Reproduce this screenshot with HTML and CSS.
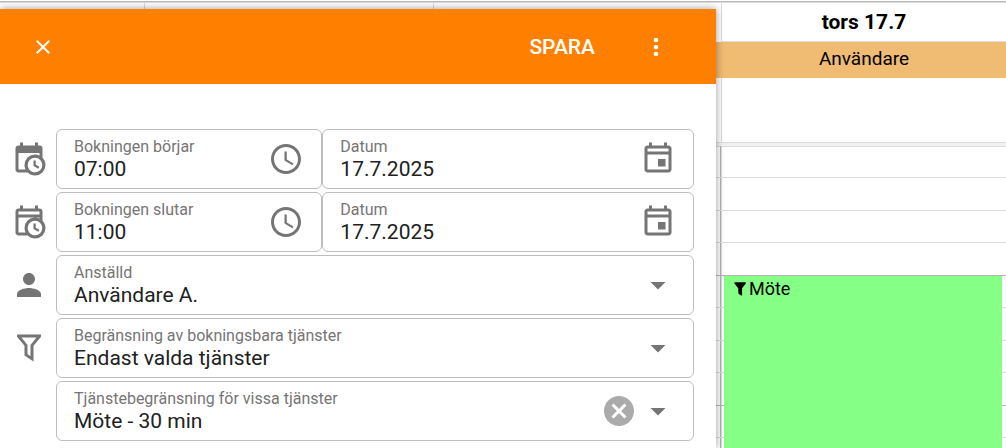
FILE: index.html
```html
<!DOCTYPE html>
<html lang="sv">

<head>
    <meta charset="UTF-8" />
    <meta name="viewport" content="width=device-width, initial-scale=1.0" />
    <title>Bokning</title>
    <link rel="stylesheet" href="styles.css">
</head>

<body>

    <!-- Calendar -->
    <main class="calendar">
        <div class="day-header">
            <div class="time-col"></div>
            <div class="day"></div>
            <div class="day"></div>
            <div class="day">
                <h2 class="day-name">tors 17.7</h2>
                <div class="day-user">Användare</div>
            </div>
        </div>
        <div class="divider"></div>
        <div class="day-grid">
            <div class="time-col"></div>
            <div class="day"></div>
            <div class="day"></div>
            <div class="day">
                <div class="hour"><span></span><span></span><span></span><span></span></div>
                <div class="hour"><span></span><span></span><span></span><span></span></div>
                <div class="hour"><span></span><span></span><span></span><span></span></div>
                <div class="event">
                    <svg class="event-icon" viewBox="0 0 12 14">
                        <path d="M0.8 0.3h10.6q0.8 0.4 0.3 1.3L8.1 6.2V13.2q-0.3 0.6-0.9 0.3L4.6 11.7Q4.3 11.4 4.3 11V6.2L0.4 1.6Q0 0.7 0.8 0.3z" />
                    </svg>
                    <span>Möte</span>
                </div>
            </div>
        </div>
    </main>

    <!-- Booking form -->
    <form class="dialog">
        <header class="toolbar">
            <button type="button" class="tool-btn" aria-label="Stäng">
                <svg class="close-icon" viewBox="0 0 24 24">
                    <path d="M19 6.41L17.59 5 12 10.59 6.41 5 5 6.41 10.59 12 5 17.59 6.41 19 12 13.41 17.59 19 19 17.59 13.41 12z" />
                </svg>
            </button>
            <button type="submit" class="tool-btn save-btn">SPARA</button>
            <button type="button" class="tool-btn" aria-label="Mer">
                <svg class="more-icon" viewBox="0 0 24 24">
                    <path d="M12 8a2 2 0 1 0 0-4 2 2 0 0 0 0 4zm0 2a2 2 0 1 0 0 4 2 2 0 0 0 0-4zm0 6a2 2 0 1 0 0 4 2 2 0 0 0 0-4z" />
                </svg>
            </button>
        </header>

        <div class="fields">
            <div class="form-row">
                <svg class="icon" viewBox="0 0 24 24">
                    <path d="M15,13H16.5V15.82L18.94,17.23L18.19,18.53L15,16.69V13M19,8H5V19H9.67C9.24,18.09 9,17.07 9,16A7,7 0 0,1 16,9C17.07,9 18.09,9.24 19,9.67V8M5,21C3.89,21 3,20.1 3,19V5C3,3.89 3.89,3 5,3H6V1H8V3H16V1H18V3H19A2,2 0 0,1 21,5V11.1C22.24,12.36 23,14.09 23,16A7,7 0 0,1 16,23C14.09,23 12.36,22.24 11.1,21H5M16,11.15A4.85,4.85 0 0,0 11.15,16C11.15,18.68 13.32,20.85 16,20.85A4.85,4.85 0 0,0 20.85,16C20.85,13.32 18.68,11.15 16,11.15Z" />
                </svg>
                <div class="field time-field">
                    <div class="field-text">
                        <label for="startTime">Bokningen börjar</label>
                        <input type="text" id="startTime" value="07:00">
                    </div>
                    <button type="button" class="icon-btn" aria-label="Välj tid">
                        <svg class="icon" viewBox="0 0 24 24">
                            <path d="M11.99 2C6.47 2 2 6.48 2 12s4.47 10 9.99 10C17.52 22 22 17.52 22 12S17.52 2 11.99 2zM12 20c-4.42 0-8-3.58-8-8s3.58-8 8-8 8 3.58 8 8-3.58 8-8 8zm.5-13H11v6l5.25 3.15.75-1.23-4.5-2.67z" />
                        </svg>
                    </button>
                </div>
                <div class="field">
                    <div class="field-text">
                        <label for="startDate">Datum</label>
                        <input type="text" id="startDate" value="17.7.2025">
                    </div>
                    <button type="button" class="icon-btn" aria-label="Välj datum">
                        <svg class="icon" viewBox="0 0 24 24">
                            <path d="M17 12h-5v5h5v-5zM16 1v2H8V1H6v2H5c-1.1 0-2 .9-2 2v14c0 1.1.9 2 2 2h14c1.1 0 2-.9 2-2V5c0-1.1-.9-2-2-2h-1V1h-2zm3 18H5V9h14v10zM5 7V5h14v2H5z" fill-rule="evenodd" />
                        </svg>
                    </button>
                </div>
            </div>

            <div class="form-row">
                <svg class="icon" viewBox="0 0 24 24">
                    <path fill-rule="evenodd" d="M15,13H16.5V15.82L18.94,17.23L18.19,18.53L15,16.69V13M19,9H5V19H9.67C9.24,18.09 9,17.07 9,16A7,7 0 0,1 16,9C17.07,9 18.09,9.24 19,9.67V9M5,5V7H19V5H5M5,21C3.89,21 3,20.1 3,19V5C3,3.89 3.89,3 5,3H6V1H8V3H16V1H18V3H19A2,2 0 0,1 21,5V11.1C22.24,12.36 23,14.09 23,16A7,7 0 0,1 16,23C14.09,23 12.36,22.24 11.1,21H5M16,11.15A4.85,4.85 0 0,0 11.15,16C11.15,18.68 13.32,20.85 16,20.85A4.85,4.85 0 0,0 20.85,16C20.85,13.32 18.68,11.15 16,11.15Z" />
                </svg>
                <div class="field time-field">
                    <div class="field-text">
                        <label for="endTime">Bokningen slutar</label>
                        <input type="text" id="endTime" value="11:00">
                    </div>
                    <button type="button" class="icon-btn" aria-label="Välj tid">
                        <svg class="icon" viewBox="0 0 24 24">
                            <path d="M11.99 2C6.47 2 2 6.48 2 12s4.47 10 9.99 10C17.52 22 22 17.52 22 12S17.52 2 11.99 2zM12 20c-4.42 0-8-3.58-8-8s3.58-8 8-8 8 3.58 8 8-3.58 8-8 8zm.5-13H11v6l5.25 3.15.75-1.23-4.5-2.67z" />
                        </svg>
                    </button>
                </div>
                <div class="field">
                    <div class="field-text">
                        <label for="endDate">Datum</label>
                        <input type="text" id="endDate" value="17.7.2025">
                    </div>
                    <button type="button" class="icon-btn" aria-label="Välj datum">
                        <svg class="icon" viewBox="0 0 24 24">
                            <path d="M17 12h-5v5h5v-5zM16 1v2H8V1H6v2H5c-1.1 0-2 .9-2 2v14c0 1.1.9 2 2 2h14c1.1 0 2-.9 2-2V5c0-1.1-.9-2-2-2h-1V1h-2zm3 18H5V9h14v10zM5 7V5h14v2H5z" fill-rule="evenodd" />
                        </svg>
                    </button>
                </div>
            </div>

            <div class="form-row">
                <svg class="icon" viewBox="0 0 24 24">
                    <path d="M12 12c2.21 0 4-1.79 4-4s-1.79-4-4-4-4 1.79-4 4 1.79 4 4 4zm0 2c-2.67 0-8 1.34-8 4v2h16v-2c0-2.66-5.33-4-8-4z" />
                </svg>
                <div class="field">
                    <div class="field-text">
                        <label for="employee">Anställd</label>
                        <select id="employee">
                            <option>Användare A.</option>
                        </select>
                    </div>
                    <svg class="icon" viewBox="0 0 24 24">
                        <path d="M7 10l5 5 5-5z" />
                    </svg>
                </div>
            </div>

            <div class="form-row">
                <svg class="icon" viewBox="0 0 24 24">
                    <path fill-rule="evenodd" d="M4 3H20V4.5L15 10.5V21L9 17V10.5L4 4.5zM7 5L11 10V16L13 17.5V10L17 5z" />
                </svg>
                <div class="field">
                    <div class="field-text">
                        <label for="limit">Begränsning av bokningsbara tjänster</label>
                        <select id="limit">
                            <option>Endast valda tjänster</option>
                        </select>
                    </div>
                    <svg class="icon" viewBox="0 0 24 24">
                        <path d="M7 10l5 5 5-5z" />
                    </svg>
                </div>
            </div>

            <div class="form-row">
                <span class="icon"></span>
                <div class="field">
                    <div class="field-text">
                        <label for="services">Tjänstebegränsning för vissa tjänster</label>
                        <select id="services">
                            <option>Möte - 30 min</option>
                        </select>
                    </div>
                    <button type="button" class="icon-btn clear-btn" aria-label="Rensa">
                        <svg class="icon" viewBox="0 0 24 24">
                            <path d="M12 2C6.47 2 2 6.47 2 12s4.47 10 10 10 10-4.47 10-10S17.53 2 12 2zm5 13.59L15.59 17 12 13.41 8.41 17 7 15.59 10.59 12 7 8.41 8.41 7 12 10.59 15.59 7 17 8.41 13.41 12 17 15.59z" />
                        </svg>
                    </button>
                    <svg class="icon" viewBox="0 0 24 24">
                        <path d="M7 10l5 5 5-5z" />
                    </svg>
                </div>
            </div>
        </div>
    </form>

</body>

</html>
```
FILE: styles.css
```css
* {
    box-sizing: border-box;
}

body {
    margin: 0;
    position: relative;
    height: 100vh;
    overflow: hidden;
    font-family: Roboto, sans-serif;
    background-color: #fff;
    color: #000;
}

button,
input,
select {
    font-family: inherit;
    border: none;
    padding: 0;
    margin: 0;
    background: none;
}

button {
    cursor: pointer;
}

/* Calendar */
.calendar {
    height: 100%;
    padding-top: 1px;
    overflow: hidden;
}

.day-header,
.day-grid {
    display: grid;
    grid-template-columns: 144px 1fr 1fr 285px;
}

.day-header {
    border-top: 1px solid #b9bcbc;
}

.day-header .day {
    min-height: 140px;
    border-top: 1px solid #dcdcdc;
    border-left: 1px solid #dcdcdc;
}

.day-header .time-col {
    border-top: 1px solid #dcdcdc;
}

.day-name {
    margin: 0;
    font-size: 21px;
    line-height: 38px;
    font-weight: bold;
    text-align: center;
    border-bottom: 1px solid #dcdcdc;
}

.day-user {
    height: 36px;
    font-size: 19px;
    line-height: 34px;
    text-align: center;
    background-color: #f0bb73;
    margin-left: -8px;
    padding-left: 8px;
}

.divider {
    position: relative;
    height: 4px;
    background-color: #f0f0f0;
    border-top: 1px solid #dcdcdc;
    box-shadow: 0 1px 0 #dcdcdc;
}

.day-grid .day {
    position: relative;
    border-left: 1px solid #dcdcdc;
    box-shadow: -1px 0 0 #adb3ba;
}

.hour {
    display: grid;
    grid-template-rows: repeat(4, 1fr);
    height: 130px;
    margin-left: -8px;
    border-bottom: 1px solid #b4b4b8;
}

.hour span {
    border-bottom: 1px solid #dcdcdc;
}

.hour span:last-child {
    border-bottom: none;
}

.event {
    position: absolute;
    top: 130px;
    bottom: 0;
    left: 2px;
    right: 4px;
    display: flex;
    align-items: flex-start;
    gap: 3px;
    padding: 2px 10px;
    font-size: 18px;
    line-height: 22px;
    background-color: #85ff85;
}

.event-icon {
    width: 12px;
    height: 22px;
}

/* Booking form */
.dialog {
    position: absolute;
    top: 9px;
    bottom: 0;
    left: 0;
    width: calc(100% - 290px);
    background-color: #fff;
    box-shadow: 0 0 8px rgba(0, 0, 0, 0.4);
}

.toolbar {
    display: flex;
    align-items: center;
    gap: 47px;
    height: 75px;
    padding: 0 46px 0 31px;
    background-color: #ff8000;
}

.tool-btn {
    display: flex;
    color: #fff;
}

.save-btn {
    margin-left: auto;
    font-size: 21px;
    font-weight: 500;
}

.close-icon {
    width: 24px;
    height: 24px;
    fill: #fff;
}

.more-icon {
    width: 28px;
    height: 28px;
    fill: #fff;
}

.fields {
    display: flex;
    flex-direction: column;
    gap: 3px;
    padding: 45px 22px 0 11px;
}

.form-row {
    display: flex;
    align-items: center;
}

.icon {
    display: block;
    flex: none;
    width: 36px;
    height: 36px;
    fill: #757575;
}

.form-row > .icon {
    margin-right: 9px;
}

.field {
    flex: 1;
    min-width: 0;
    display: flex;
    align-items: center;
    gap: 3px;
    height: 60px;
    padding: 0 17px;
    border: 1px solid #bdbdbd;
    border-radius: 6px;
}

.time-field {
    flex: 0 0 39%;
}

.field-text {
    flex: 1;
    min-width: 0;
    display: flex;
    flex-direction: column;
}

.field-text label {
    font-size: 16px;
    line-height: 20px;
    color: #757575;
}

.field-text input,
.field-text select {
    width: 100%;
    height: 24px;
    font-size: 21px;
    line-height: 24px;
    color: #212121;
    appearance: none;
    outline: none;
}

.clear-btn .icon {
    fill: #ababab;
}
```
